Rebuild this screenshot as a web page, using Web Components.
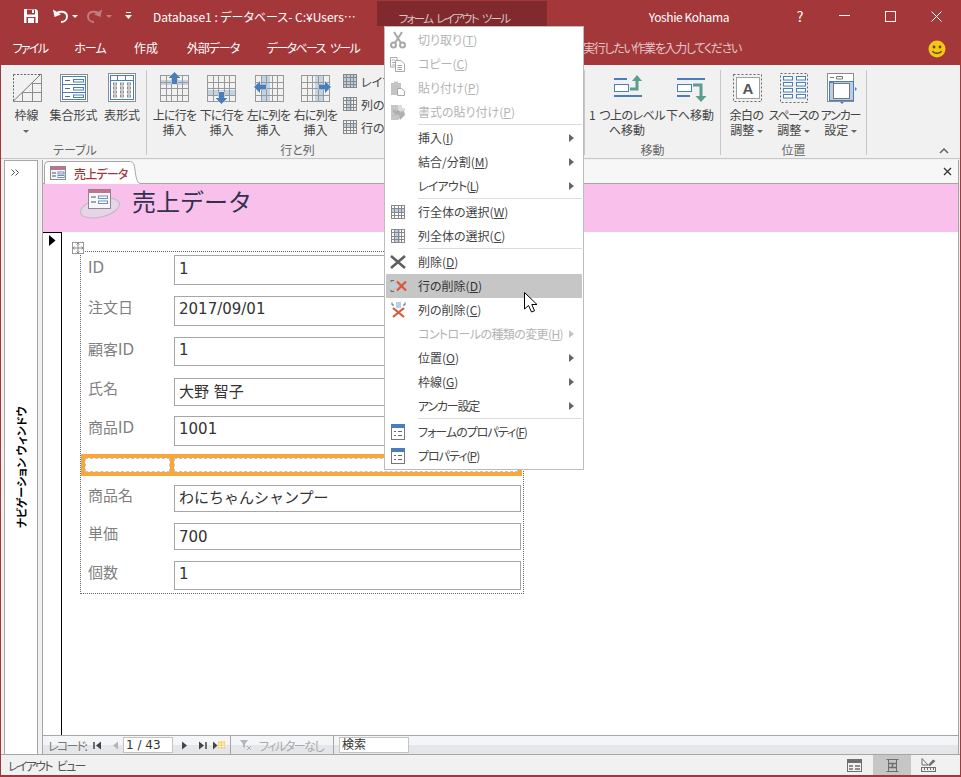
<!DOCTYPE html>
<html lang="ja">
<head>
<meta charset="utf-8">
<title>Database1</title>
<style>
  html, body { margin: 0; padding: 0; background: #fff; overflow: hidden; }
  .k4 { letter-spacing: -.8px; }
  .k5 { letter-spacing: -1.2px; }
  .k2 { letter-spacing: -.5px; word-spacing: 2px; }
</style>
</head>
<body>
<access-window>
  <title-bar></title-bar>
  <tab-row></tab-row>
  <ribbon-bar>
    <ribbon-group label="テーブル" w="143" pad="0">
      <ribbon-button icon="border" w="45">枠線<br><r-caret></r-caret></ribbon-button>
      <ribbon-button icon="stacked" w="49">集合形式</ribbon-button>
      <ribbon-button icon="tabular" w="48">表形式</ribbon-button>
    </ribbon-group>
    <ribbon-group label="行と列" w="302" pad="4">
      <ribbon-button icon="rowUp" w="47"><span class="k4">上に行を</span><br>挿入</ribbon-button>
      <ribbon-button icon="rowDown" w="47"><span class="k4">下に行を</span><br>挿入</ribbon-button>
      <ribbon-button icon="colLeft" w="47"><span class="k4">左に列を</span><br>挿入</ribbon-button>
      <ribbon-button icon="colRight" w="47"><span class="k4">右に列を</span><br>挿入</ribbon-button>
      <small-stack>
        <small-button icon="selAll">レイアウトの選択</small-button>
        <small-button icon="selCol">列の選択</small-button>
        <small-button icon="selRow">行の選択</small-button>
      </small-stack>
    </ribbon-group>
    <ribbon-group label="" w="136" pad="0"></ribbon-group>
    <ribbon-group label="移動" w="136" pad="6">
      <ribbon-button icon="moveUp" w="72"><span class="k2">1 つ上のレベル</span><br>へ移動</ribbon-button>
      <ribbon-button icon="moveDown" w="54">下へ移動</ribbon-button>
    </ribbon-group>
    <ribbon-group label="位置" w="146" pad="2">
      <ribbon-button icon="margins" w="47"><span class="k2">余白の</span><br>調整 <r-caret></r-caret></ribbon-button>
      <ribbon-button icon="spacing" w="47"><span class="k5">スペースの</span><br>調整 <r-caret></r-caret></ribbon-button>
      <ribbon-button icon="anchor" w="47"><span class="k5">アンカー</span><br>設定 <r-caret></r-caret></ribbon-button>
    </ribbon-group>
  </ribbon-bar>
  <work-area>
    <nav-pane></nav-pane>
    <doc-pane>
      <form-row label="ID" value="1" style="--h:30px;--gap:11px;--lp:4px;--vp:3px"></form-row>
      <form-row label="注文日" value="2017/09/01" style="--h:30px;--gap:11px;--lp:10px;--vp:5px"></form-row>
      <form-row label="顧客ID" value="1" style="--h:29px;--gap:12px;--lp:6px;--vp:3px"></form-row>
      <form-row label="氏名" value="大野 智子" style="--h:28px;--gap:10px;--lp:10px;--vp:3px"></form-row>
      <form-row label="商品ID" value="1001" style="--h:30px;--gap:8px;--lp:10px;--vp:5px"></form-row>
      <empty-row></empty-row>
      <form-row label="商品名" value="わにちゃんシャンプー" style="--h:27px;--gap:11px;--lp:8px;--vp:5px"></form-row>
      <form-row label="単価" value="700" style="--h:27px;--gap:11px;--lp:8px;--vp:0px"></form-row>
      <form-row label="個数" value="1" style="--h:29px;--gap:0px;--lp:8px;--vp:3px"></form-row>
    </doc-pane>
  </work-area>
  <status-bar></status-bar>

  <context-menu>
    <menu-item icon="cut" disabled><span>切り取り(<u>T</u>)</span></menu-item>
    <menu-item icon="copy" disabled><span>コピー(<u>C</u>)</span></menu-item>
    <menu-item icon="paste" disabled><span>貼り付け(<u>P</u>)</span></menu-item>
    <menu-item icon="painter" disabled><span>書式の貼り付け(<u>P</u>)</span></menu-item>
    <menu-sep></menu-sep>
    <menu-item arrow><span>挿入(<u>I</u>)</span></menu-item>
    <menu-item arrow><span>結合/分割(<u>M</u>)</span></menu-item>
    <menu-item arrow><span class="k4">レイアウト(<u>L</u>)</span></menu-item>
    <menu-sep></menu-sep>
    <menu-item icon="selRow"><span>行全体の選択(<u>W</u>)</span></menu-item>
    <menu-item icon="selCol"><span>列全体の選択(<u>C</u>)</span></menu-item>
    <menu-sep></menu-sep>
    <menu-item icon="del"><span>削除(<u>D</u>)</span></menu-item>
    <menu-item icon="delRow" hover><span>行の削除(<u>D</u>)</span></menu-item>
    <menu-item icon="delCol"><span>列の削除(<u>C</u>)</span></menu-item>
    <menu-item arrow disabled><span style="letter-spacing:-.6px">コントロールの種類の変更(<u>H</u>)</span></menu-item>
    <menu-item arrow><span>位置(<u>O</u>)</span></menu-item>
    <menu-item arrow><span>枠線(<u>G</u>)</span></menu-item>
    <menu-item arrow><span class="k5">アンカー設定</span></menu-item>
    <menu-sep></menu-sep>
    <menu-item icon="props"><span style="letter-spacing:-1px">フォームのプロパティ(<u>F</u>)</span></menu-item>
    <menu-item icon="props"><span style="letter-spacing:-1px">プロパティ(<u>P</u>)</span></menu-item>
  </context-menu>
  <mouse-pointer></mouse-pointer>
</access-window>

<script>
const UI_FONT = `"Noto Sans CJK JP", "Noto Sans", sans-serif`;
const BLUE = "#4a7ebb";
const GREEN = "#5c9e8e";
const GREY = "#999";

// draws a table of thin lines
function grid(x, y, w, h, cols, rows, color = GREY) {
  let d = "";
  for (let i = 0; i <= cols; i++) {
    const px = x + Math.round((w * i) / cols) + 0.5;
    d += `M${px} ${y}V${y + h + 1}`;
  }
  for (let i = 0; i <= rows; i++) {
    const py = y + Math.round((h * i) / rows) + 0.5;
    d += `M${x} ${py}H${x + w + 1}`;
  }
  return `<path d="${d}" fill="none" stroke="${color}"/>`;
}

const arrowAttrs = `fill="${BLUE}" stroke="#fff" stroke-width=".8" paint-order="stroke"`;
const arrowUp = (x, y) => `<path d="M${x} ${y}l6 6h-3.500v6h-5v-6h-3.500z" ${arrowAttrs}/>`;
const arrowDown = (x, y) => `<path d="M${x} ${y}l6 -6h-3.500v-6h-5v6h-3.500z" ${arrowAttrs}/>`;
const arrowLeft = (x, y) => `<path d="M${x} ${y}l6 -6v3.500h6v5h-6v3.500z" ${arrowAttrs}/>`;
const arrowRight = (x, y) => `<path d="M${x} ${y}l-6 -6v3.500h-6v5h6v3.500z" ${arrowAttrs}/>`;

function spacingColumn(x) {
  return [5, 11, 17, 23]
    .map((y) => `<rect x="${x + 0.5}" y="${y + 0.5}" width="9" height="3.500" fill="#fff" stroke="${BLUE}"/>`)
    .join("");
}

const ICONS = {
  // ribbon, 32x34
  border: [32, 34, `<path d="M2.500 3.500H30M2.500 3.500V30" fill="none" stroke="#666" stroke-dasharray="2 1.500"/>
    <path d="M2 30.500L30 3" stroke="#777" fill="none"/>
    <path d="M2 30.500H30.500V3M11.500 21V30M21.500 12V30M11 21.500H30M21 12.500H30" stroke="#8c8c8c" fill="none"/>`],
  stacked: [32, 34, `<rect x="2.500" y="3.500" width="27" height="27" fill="#fff" stroke="#8c8c8c"/>
    <rect x="4.500" y="5.500" width="23" height="23" fill="#fff" stroke="${BLUE}"/>
    <path d="M5 13.500H27M5 21.500H27" stroke="${BLUE}"/>
    <path d="M7 9.500H12M7 17.500H12M7 25.500H12" stroke="#666"/>
    <rect x="15.500" y="8.500" width="10" height="2.500" fill="#fff" stroke="${BLUE}"/>
    <rect x="15.500" y="16.500" width="10" height="2.500" fill="#fff" stroke="${BLUE}"/>
    <rect x="15.500" y="24" width="10" height="2.500" fill="#fff" stroke="${BLUE}"/>`],
  tabular: [32, 34, `<rect x="2.500" y="2.500" width="27" height="28" fill="#fff" stroke="#8c8c8c"/>
    <rect x="4.500" y="4.500" width="23" height="24" fill="#fff" stroke="${BLUE}"/>
    <path d="M11.500 5V9M19.500 5V9M5 9.500H27" stroke="${BLUE}"/>
    ${[12, 16, 20, 24].map((y) => [7.500, 14.500, 21.500].map((x) => `<rect x="${x}" y="${y}" width="3" height="2" fill="#fff" stroke="#777" stroke-width=".8"/>`).join("")).join("")}`],
  rowUp: [32, 34, `<rect x="1" y="9" width="29" height="5" fill="#c3d3e6"/>${grid(1, 4, 28, 26, 5, 4)}${arrowUp(15.500, 1)}`],
  rowDown: [32, 34, `<rect x="1" y="19" width="29" height="5" fill="#c3d3e6"/>${grid(1, 4, 28, 26, 5, 4)}${arrowDown(15.500, 33)}`],
  colLeft: [32, 34, `<rect x="9" y="4" width="8" height="26" fill="#c3d3e6"/>${grid(2, 4, 28, 26, 5, 4)}${arrowLeft(1, 16)}`],
  colRight: [32, 34, `<rect x="15" y="4" width="8" height="26" fill="#c3d3e6"/>${grid(1, 4, 28, 26, 5, 4)}${arrowRight(31, 16)}`],
  moveUp: [32, 34, `<rect x="3" y="7" width="13" height="2" fill="${BLUE}"/>
    <rect x="3.500" y="13.500" width="14" height="7" fill="#fff" stroke="${BLUE}"/>
    <rect x="3" y="24" width="28" height="2" fill="${BLUE}"/>
    <path d="M19 18H26V8" fill="none" stroke="${GREEN}" stroke-width="3"/>
    <path d="M26 4l5 6h-10z" fill="${GREEN}"/>`],
  moveDown: [32, 34, `<rect x="3" y="7" width="28" height="2" fill="${BLUE}"/>
    <rect x="3.500" y="13.500" width="14" height="7" fill="#fff" stroke="${BLUE}"/>
    <rect x="3" y="24" width="13" height="2" fill="${BLUE}"/>
    <path d="M19 14H27V26" fill="none" stroke="${GREEN}" stroke-width="3"/>
    <path d="M27 31l-5.500 -6h11z" fill="${GREEN}"/>`],
  margins: [32, 34, `<rect x="2.500" y="3.500" width="28" height="27" fill="none" stroke="#666" stroke-dasharray="2 2"/>
    <rect x="5.500" y="6.500" width="23" height="21" fill="#fff" stroke="#a0a0a0"/>
    <text x="17" y="23" text-anchor="middle" font-size="15" font-weight="700" fill="#555" font-family="Liberation Sans, sans-serif">A</text>`],
  spacing: [32, 34, `<rect x="2.500" y="2.500" width="27" height="29" fill="none" stroke="#666" stroke-dasharray="2 2"/>
    ${spacingColumn(5)}${spacingColumn(18)}`],
  anchor: [32, 34, `<rect x="2.500" y="2.500" width="26" height="28" fill="#fff" stroke="#8c8c8c"/>
    <path d="M5 6.500H9M11.500 5.500h6v2.500h-6z" fill="none" stroke="#777"/>
    <rect x="4.500" y="10.500" width="24" height="19" fill="#b9cde4" stroke="${BLUE}"/>
    <rect x="8.500" y="12.500" width="16" height="15" fill="#fff" stroke="#777"/>
    <path d="M5 11.500H9" stroke="#777"/>
    <path d="M30 16l2 2 -2 2z M15 31l2 2 2 -2z" fill="${BLUE}"/>`],
  // small stack in the ribbon and menu entries
  selAll: [14, 14, `<rect width="14" height="14" fill="#bccde2"/>${grid(0, 0, 13, 13, 4, 4, "#888")}`],
  selCol: [14, 14, `<rect x="4" width="5" height="14" fill="#bccde2"/>${grid(0, 0, 13, 13, 4, 4, "#888")}`],
  selRow: [14, 14, `<rect y="3" width="14" height="4" fill="#bccde2"/>${grid(0, 0, 13, 13, 4, 4, "#888")}`],
  cut: [18, 18, `<g fill="none" stroke="#a8a8a8" stroke-width="2"><circle cx="4.500" cy="14" r="2.500"/><circle cx="13.500" cy="14" r="2.500"/><path d="M6 12L13 1M12 12L5 1"/></g>`],
  copy: [16, 16, `<g fill="#fff" stroke="#a8a8a8"><path d="M.5 1.500H7V11H.5z"/><path d="M5.500 4.500H11L14.500 8V15.500H5.500z"/><path d="M2 4H5M2 6.500H5M2 9H5M7.500 9.500H12M7.500 11.500H12M7.500 13.500H12"/></g>`],
  paste: [16, 16, `<path d="M1 3H4V1.500H8V3H11V15H1z" fill="#c4c4c4"/><path d="M7.500 8.500H11.500L14.500 11V15.500H7.500z" fill="#fff" stroke="#a8a8a8"/>`],
  painter: [18, 18, `<path d="M2 2H12V5H15V12L9 17H2z" fill="#c6c6c6"/><path d="M9 2H13V5H16V8H9z" fill="#dcdcdc"/><text x="4" y="12" font-size="8" fill="#8e8e8e" font-family="Liberation Sans, sans-serif">%</text><path d="M10 10l5 -2 1 4 -5 5z" fill="#b0b0b0"/>`],
  del: [16, 14, `<path d="M1 1L15 13M15 1L1 13" stroke="#5f5f5f" stroke-width="2.600" fill="none"/>`],
  delRow: [17, 14, `<path d="M1 1.500H4M1 1.500V3M1 11V12.500H4" stroke="#666" fill="none"/><rect x="0" y="5" width="7" height="4" fill="#bccde2"/><path d="M7 2.500L16 11.500M16 2.500L7 11.500" stroke="#d9583a" stroke-width="2.200" fill="none"/>`],
  delCol: [15, 16, `<path d="M1 .5V3H3M14 .5V3H12" stroke="#666" fill="none"/><rect x="5" y="0" width="5" height="6" fill="#bccde2"/><path d="M2 6L13 15M13 6L2 15" stroke="#d9583a" stroke-width="2.200" fill="none"/>`],
  props: [14, 16, `<rect x=".5" y=".5" width="13" height="15" fill="#fff" stroke="#777"/><rect width="14" height="4" fill="${BLUE}"/><path d="M3 7.500H5M3 11.500H5M7 7.500H11M7 11.500H11" stroke="#666"/>`],
  // record navigation
  first: [9, 9, `<path d="M1 1V8" stroke="#444" stroke-width="1.500"/><path d="M8 .5V8.500L3 4.500z" fill="#444"/>`],
  prev: [7, 9, `<path d="M6 .5V8.500L1 4.500z" fill="#b5b5b5"/>`],
  next: [7, 9, `<path d="M1 .5V8.500L6 4.500z" fill="#444"/>`],
  last: [9, 9, `<path d="M8 1V8" stroke="#444" stroke-width="1.500"/><path d="M1 .5V8.500L6 4.500z" fill="#444"/>`],
  newRec: [12, 9, `<path d="M0 .5V8.500L4.500 4.500z" fill="#444"/><rect x="5" y=".5" width="7" height="7" fill="#f3c64a"/><path d="M7 .5V8M10 .5V8M5 3H12M5 5.500H12" stroke="#fff" stroke-width=".7"/>`],
  filter: [12, 12, `<path d="M0 1H8L5 5V9L3 8V5z" fill="#b5b5b5"/><path d="M7 7L11 11M11 7L7 11" stroke="#b5b5b5"/>`],
  // status bar views
  viewForm: [15, 13, `<rect width="15" height="13" fill="#6e6e6e"/><rect x="1" y="4" width="13" height="8" fill="#f1f1f1"/><path d="M2 7H6M2 10H6M8 7H13M8 10H13" stroke="#6e6e6e" stroke-width="1.500"/>`],
  viewLayout: [13, 13, `<path d="M.5 .5H12.500M.5 12.500H12.500M2.500 1V12M10.500 1V12" stroke="#6e6e6e" fill="none"/><path d="M3 4.500H10M3 8.500H10M6.500 4V9" stroke="#6e6e6e" fill="none" stroke-width="1.500"/>`],
  viewDesign: [15, 14, `<path d="M1 .5V7H7z" fill="#f1f1f1" stroke="#6e6e6e"/><path d="M7 7L12 1.500L14.500 3L9 8z" fill="#6e6e6e"/><rect x=".5" y="9.500" width="14" height="4" fill="#f1f1f1" stroke="#6e6e6e"/><path d="M3.500 10V12M6.500 10V12M9.500 10V12M12.500 10V12" stroke="#6e6e6e"/>`],
};

class Base extends HTMLElement {
  constructor() {
    super();
    this.attachShadow({ mode: "open" });
  }
  render(html) {
    this.shadowRoot.innerHTML = html;
  }
}

class AppIcon extends Base {
  connectedCallback() {
    const [w, h, body] = ICONS[this.getAttribute("name")] || [0, 0, ""];
    this.render(`<style>:host{display:block;width:${w}px;height:${h}px;flex:none}svg{display:block}</style>
      <svg width="${w}" height="${h}" viewBox="0 0 ${w} ${h}">${body}</svg>`);
  }
}
customElements.define("app-icon", AppIcon);

class AccessWindow extends Base {
  connectedCallback() {
    this.render(`<style>
      :host{display:flex;flex-direction:column;position:relative;box-sizing:border-box;width:961px;height:777px;
        border:1px solid #a4373a;border-top:0;border-bottom-width:2px;background:#f1f1f1;overflow:hidden;
        font-family:${UI_FONT};font-size:12px;font-feature-settings:"palt";color:#444}
    </style><slot></slot>`);
  }
}
customElements.define("access-window", AccessWindow);

class TitleBar extends Base {
  connectedCallback() {
    this.render(`<style>
      :host{display:flex;height:32px;margin:0 -1px;padding:0 2px 0 1px;background:#a4373a;color:#fff;flex:none;font-size:12px}
      svg{display:block}
      .qat{display:flex;align-items:center;width:152px;flex:none;height:32px}
      .title{width:224px;flex:none;line-height:34px;white-space:nowrap}
      .ctx{width:170px;height:25px;margin-top:1px;flex:none;box-sizing:border-box;padding-right:16px;background:#802a2d;color:#d9c3c4;text-align:center;line-height:34px;font-size:11.500px;letter-spacing:-1.700px;word-spacing:3px;white-space:nowrap}
      .fill{flex:1}
      .user{line-height:34px;margin-right:46px;letter-spacing:-.4px}
      .win{width:46px;display:flex;align-items:center;justify-content:center;flex:none;height:32px}
      .help{font-size:14px;padding-left:4px;box-sizing:border-box}
    </style>
    <div class="qat">
      <svg width="16" height="16" style="margin-left:22px" viewBox="0 0 16 16"><path d="M1 1H13L15 3V15H1z" fill="#fff"/><rect x="4" y="1.500" width="8" height="5" fill="#a4373a"/><rect x="3.500" y="9" width="9" height="6" fill="#a4373a"/><rect x="9" y="2" width="2" height="3" fill="#fff"/><rect x="5" y="10" width="6" height="5" fill="#fff"/></svg>
      <svg width="26" height="16" style="margin-left:13px" viewBox="0 0 26 16"><path d="M3 7C6 2 15 3 15 8.500C15 12 12 14 9 14" fill="none" stroke="#fff" stroke-width="2"/><path d="M1 1.500L2.500 9L9 6.500z" fill="#fff"/><path d="M20 7H26L23 10z" fill="#fff"/></svg>
      <svg width="26" height="16" style="margin-left:8px" viewBox="0 0 26 16"><path d="M14 7C11 2 2 3 2 8.500C2 12 5 14 8 14" fill="none" stroke="#c27c7e" stroke-width="2"/><path d="M16 1.500L14.500 9L8 6.500z" fill="#c27c7e"/><path d="M20 7H26L23 10z" fill="#c27c7e"/></svg>
      <svg width="7" height="8" style="margin-left:13px" viewBox="0 0 7 8"><path d="M1 .5H6" stroke="#fff"/><path d="M0 3H7L3.500 7z" fill="#fff"/></svg>
    </div>
    <div class="title">Database1 : データベース- C:¥Users⋯</div>
    <div class="ctx">フォーム レイアウト ツール</div>
    <div class="fill"></div>
    <div class="user">Yoshie Kohama</div>
    <div class="win help">?</div>
    <div class="win"><svg width="11" height="2"><rect width="11" height="1" y="0" fill="#fff"/></svg></div>
    <div class="win"><svg width="11" height="11"><rect x=".5" y=".5" width="10" height="10" fill="none" stroke="#fff"/></svg></div>
    <div class="win"><svg width="11" height="11"><path d="M.5 .5L10.500 10.500M10.500 .5L.5 10.500" stroke="#fff"/></svg></div>`);
  }
}
customElements.define("title-bar", TitleBar);

class TabRow extends Base {
  connectedCallback() {
    this.render(`<style>
      :host{display:flex;height:33px;margin:0 -1px;background:#a4373a;color:#fff;flex:none;font-size:12px;align-items:center}
      span{display:block;text-align:center;flex:none;padding-bottom:2px;white-space:nowrap}
      .tell{color:#e2c9ca;margin-left:211px;width:340px;text-align:left;letter-spacing:-1.300px}
      svg{display:block;margin-left:5px}
    </style>
    <span style="width:60px;letter-spacing:-1.700px">ファイル</span>
    <span style="width:60px;letter-spacing:-1px">ホーム</span>
    <span style="width:52px">作成</span>
    <span style="width:82px;letter-spacing:-1px">外部データ</span>
    <span style="width:118px;letter-spacing:-1.600px;word-spacing:4px">データベース ツール</span>
    <span class="tell">実行したい作業を入力してください</span>
    <svg width="18" height="18" viewBox="0 0 18 18"><circle cx="9" cy="9" r="8.500" fill="#f5c518"/><circle cx="6" cy="7" r="1.400" fill="#5a4a10"/><circle cx="12" cy="7" r="1.400" fill="#5a4a10"/><path d="M4.500 11C6 14 12 14 13.500 11" fill="none" stroke="#5a4a10" stroke-width="1.300"/></svg>`);
  }
}
customElements.define("tab-row", TabRow);

class RibbonBar extends Base {
  connectedCallback() {
    this.render(`<style>
      :host{display:flex;height:93px;padding:5px 0 0 3px;box-sizing:border-box;background:#f1f1f1;flex:none;position:relative}
      svg{align-self:flex-end;margin:0 0 4px 72px}
    </style><slot></slot>
    <svg width="10" height="6" viewBox="0 0 10 6"><path d="M1 5L5 1L9 5" fill="none" stroke="#666" stroke-width="1.500"/></svg>`);
  }
}
customElements.define("ribbon-bar", RibbonBar);

class RibbonGroup extends Base {
  connectedCallback() {
    const w = this.getAttribute("w");
    const pad = this.getAttribute("pad");
    this.render(`<style>
      :host{display:flex;flex-direction:column;width:${w}px;height:85px;box-sizing:border-box;border-right:1px solid #c6c6c6;flex:none}
      .btns{display:flex;height:72px;padding-left:${pad}px}
      .label{height:13px;line-height:15px;text-align:center;color:#666;white-space:nowrap}
    </style><div class="btns"><slot></slot></div><div class="label">${this.getAttribute("label")}</div>`);
  }
}
customElements.define("ribbon-group", RibbonGroup);

class RibbonButton extends Base {
  connectedCallback() {
    this.render(`<style>
      :host{display:flex;flex-direction:column;align-items:center;width:${this.getAttribute("w")}px;flex:none;padding-top:1px;box-sizing:border-box}
      .t{margin-top:2px;line-height:15px;text-align:center;white-space:nowrap}
    </style><app-icon name="${this.getAttribute("icon")}"></app-icon><div class="t"><slot></slot></div>`);
  }
}
customElements.define("ribbon-button", RibbonButton);

class RCaret extends Base {
  connectedCallback() {
    this.render(`<style>:host{display:inline-block;width:0;height:0;border:3px solid transparent;border-top:3px solid #666;border-bottom:0;vertical-align:middle}</style>`);
  }
}
customElements.define("r-caret", RCaret);

class SmallStack extends Base {
  connectedCallback() {
    this.render(`<style>:host{display:flex;flex-direction:column;gap:9px;padding:4px 0 0 4px}</style><slot></slot>`);
  }
}
customElements.define("small-stack", SmallStack);

class SmallButton extends Base {
  connectedCallback() {
    this.render(`<style>:host{display:flex;align-items:center;gap:4px;height:14px;white-space:nowrap}</style>
      <app-icon name="${this.getAttribute("icon")}"></app-icon><slot></slot>`);
  }
}
customElements.define("small-button", SmallButton);

class WorkArea extends Base {
  connectedCallback() {
    this.render(`<style>
      :host{display:flex;flex:1;min-height:0;border-top:1px solid #c6c6c6;padding:1px 0 0 3px;background:#f1f1f1}
    </style><slot></slot>`);
  }
}
customElements.define("work-area", WorkArea);

class NavPane extends Base {
  connectedCallback() {
    this.render(`<style>
      :host{display:flex;flex-direction:column;align-items:center;width:34px;box-sizing:border-box;background:#fff;
        border:1px solid #a6a6a6;border-bottom:0;margin-right:4px;flex:none}
      svg{display:block;margin:8px 12px 0 0}
      .t{writing-mode:vertical-rl;text-orientation:sideways;transform:rotate(180deg);margin-top:230px;margin-left:-1px;
        font-size:11px;font-weight:700;color:#000;white-space:nowrap;line-height:14px}
    </style>
    <svg width="9" height="7" viewBox="0 0 9 7"><path d="M.5 .5L3.500 3.500L.5 6.500M4.500 .5L7.500 3.500L4.500 6.500" fill="none" stroke="#555"/></svg>
    <div class="t">ナビゲーション ウィンドウ</div>`);
  }
}
customElements.define("nav-pane", NavPane);

class DocPane extends Base {
  connectedCallback() {
    this.render(`<style>
      :host{display:flex;flex-direction:column;flex:1;min-width:0;border-left:1px solid #a6a6a6;margin-right:1px;border-right:1px solid #a6a6a6;background:#fff}
      .strip{display:flex;height:23px;flex:none;background:#f7f7f7;border-bottom:1px solid #a6a6a6;align-items:flex-end;position:relative}
      .tab{display:flex;align-items:center;gap:7px;width:85px;height:23px;box-sizing:border-box;padding-left:5px;background:#fff;white-space:nowrap;
        border:1px solid #a6a6a6;border-bottom:0;border-right:0;border-radius:5px 0 0 0;color:#a4373a;font-size:12px;font-weight:500;margin:0 0 -1px 1px;letter-spacing:-.8px}
      .tail{display:block;margin-bottom:-1px}
      .x{margin-left:auto;margin-right:6px;align-self:center}
      .pink{display:flex;align-items:center;height:48px;flex:none;background:#f9c0ec;padding-left:37px}
      .pink svg{margin-bottom:6px}
      .pink h1{margin:0 0 14px 12px;font-size:24px;font-weight:400;color:#30324e;font-feature-settings:normal;line-height:30px}
      .body{display:flex;flex:1;min-height:0}
      .sel{flex:none;border-top:1px solid #000;border-right:1px solid #000;padding:2px 0 0 6px;width:12px}
      .sel svg{display:block}
      .canvas{flex:1;padding:19px 0 0 18px;min-width:0}
      .handle{display:flex;align-items:center;justify-content:center;width:12px;height:12px;box-sizing:border-box;border:1px solid #999;background:#fff;margin:-9px 0 -3px -8px;position:relative}
      .form{width:444px;box-sizing:border-box;border:1px dotted #666;padding:3px 0;font-size:15px}
      .foot{flex:none}
    </style>
    <div class="strip">
      <div class="tab">
        <svg width="17" height="14" viewBox="0 0 17 14"><rect x=".5" y=".5" width="15" height="13" fill="#f3f5f8" stroke="#8a8a8a"/><rect x="1" y="1" width="14" height="3" fill="#c2718f"/><path d="M2 7H6M2 10H6" stroke="#555"/><rect x="8" y="6" width="6" height="2" fill="#fff" stroke="#6f8fb5"/><rect x="8" y="9.500" width="6" height="2" fill="#fff" stroke="#6f8fb5"/></svg>
        <span>売上データ</span>
      </div>
      <svg class="tail" width="11" height="23" viewBox="0 0 11 23"><path d="M0 .5C5 .5 5 3 6 9C7 17 8 21.500 11 22.500V24H0z" fill="#fff"/><path d="M0 .5C5 .5 5 3 6 9C7 17 8 21.500 11 22.500" fill="none" stroke="#a6a6a6"/></svg>
      <svg class="x" width="9" height="9" viewBox="0 0 9 9"><path d="M1 1L8 8M8 1L1 8" stroke="#333" stroke-width="1.300"/></svg>
    </div>
    <div class="pink">
      <svg width="40" height="34" viewBox="0 0 40 34"><ellipse cx="20" cy="20" rx="20" ry="9" transform="rotate(-14 20 20)" fill="#e8d4e6" stroke="#bcbcbc"/><rect x="8.500" y="1.500" width="22" height="19" fill="#f4f6fa" stroke="#8a8a8a"/><rect x="9" y="2" width="21" height="3" fill="#c2718f"/><path d="M11 9H16M11 14H16" stroke="#555"/><rect x="18.500" y="8" width="9" height="2.500" fill="#fff" stroke="#6f8fb5"/><rect x="18.500" y="13" width="9" height="2.500" fill="#fff" stroke="#6f8fb5"/></svg>
      <h1>売上データ</h1>
    </div>
    <div class="body">
      <div class="sel"><svg width="7" height="11" viewBox="0 0 7 11"><path d="M0 0L6.500 5.500L0 11z" fill="#000"/></svg></div>
      <div class="canvas">
        <div class="handle"><svg width="10" height="10" viewBox="0 0 10 10"><path d="M5 0V10M0 5H10M3.500 1.500L5 0L6.500 1.500M3.500 8.500L5 10L6.500 8.500M1.500 3.500L0 5L1.500 6.500M8.500 3.500L10 5L8.500 6.500" fill="none" stroke="#888"/></svg></div>
        <div class="form"><slot></slot></div>
      </div>
    </div>
    <record-bar class="foot"></record-bar>`);
  }
}
customElements.define("doc-pane", DocPane);

class FormRow extends Base {
  connectedCallback() {
    this.render(`<style>
      :host{display:flex;align-items:center;height:var(--h);margin-bottom:var(--gap);
        font-family:"DejaVu Sans","Noto Sans CJK JP",sans-serif;font-size:15px;font-feature-settings:normal}
      .l{width:86px;margin-left:7px;padding-bottom:var(--lp);color:#7f7f7f;flex:none;white-space:nowrap}
      .v{width:347px;height:100%;box-sizing:border-box;border:1px solid #a6a6a6;background:#fff;padding:0 4px;padding-bottom:var(--vp);color:#333;display:flex;align-items:center;white-space:nowrap;flex:none}
    </style>
    <div class="l">${this.getAttribute("label")}</div><div class="v">${this.getAttribute("value")}</div>`);
  }
}
customElements.define("form-row", FormRow);

class EmptyRow extends Base {
  connectedCallback() {
    this.render(`<style>
      :host{display:flex;height:22px;margin-bottom:9px}
      div{box-sizing:border-box;height:100%;border:4px solid #f9a63b;outline:1px dashed #c4c4c4;outline-offset:-5px}
      .a{width:93px}
      .b{width:352px;margin-left:-4px}
    </style><div class="a"></div><div class="b"></div>`);
  }
}
customElements.define("empty-row", EmptyRow);

class RecordBar extends Base {
  connectedCallback() {
    this.render(`<style>
      :host{display:flex;align-items:center;height:19px;flex:none;box-sizing:border-box;border-top:1px solid #a6a6a6;
        background:linear-gradient(#f4f5f7 0 50%,#e4e6ea 50% 100%);font-size:12px;color:#777}
      .lbl{margin-left:5px;width:40px;flex:none;white-space:nowrap;letter-spacing:-1.700px}
      .nav{display:flex;align-items:center;justify-content:center;width:18px;flex:none}
      .box{background:#fff;border:1px solid #c4c4c4;box-sizing:border-box;height:16px;line-height:14px;color:#333;white-space:nowrap;flex:none;font-family:"DejaVu Sans","Noto Sans CJK JP",sans-serif;font-feature-settings:normal;font-size:12px;padding-left:2px}
      .sep{width:1px;height:18px;background:#a6a6a6;flex:none}
      .f{color:#aaa;white-space:nowrap;margin-left:7px;width:66px;letter-spacing:-1.500px}
    </style>
    <div class="lbl">レコード:</div>
    <div class="nav"><app-icon name="first"></app-icon></div>
    <div class="nav"><app-icon name="prev"></app-icon></div>
    <div class="box" style="width:50px;margin-left:-1px">1 / 43</div>
    <div class="nav" style="margin-left:2px"><app-icon name="next"></app-icon></div>
    <div class="nav"><app-icon name="last"></app-icon></div>
    <div class="nav" style="width:13px;margin-left:1px"><app-icon name="newRec"></app-icon></div>
    <div class="sep" style="margin-left:5px"></div>
    <div style="width:9px;flex:none"></div>
    <app-icon name="filter"></app-icon>
    <div class="f">フィルターなし</div>
    <div class="sep" style="margin-left:8px"></div>
    <div class="box" style="width:70px;margin-left:5px">検索</div>`);
  }
}
customElements.define("record-bar", RecordBar);

class StatusBar extends Base {
  connectedCallback() {
    this.render(`<style>
      :host{display:flex;align-items:center;height:20px;flex:none;background:#f1f1f1;border-top:1px solid #a6a6a6;color:#555;font-size:12px}
      .t{margin-left:7px;flex:1;white-space:nowrap;letter-spacing:-1.700px;word-spacing:4px}
      .v{display:flex;align-items:center;justify-content:center;width:38px;height:100%;flex:none}
      .on{background:#c6c6c6}
    </style>
    <div class="t">レイアウト ビュー</div>
    <div class="v"><app-icon name="viewForm"></app-icon></div>
    <div class="v on"><app-icon name="viewLayout"></app-icon></div>
    <div class="v" style="width:34px;margin-right:15px"><app-icon name="viewDesign"></app-icon></div>`);
  }
}
customElements.define("status-bar", StatusBar);

class ContextMenu extends Base {
  connectedCallback() {
    this.render(`<style>
      :host{position:absolute;left:383px;top:26px;width:200px;height:444px;box-sizing:border-box;background:#fff;border:1px solid #bdbdbd;padding:1px 1px;
        display:flex;flex-direction:column;font-size:12px;color:#444}
    </style><slot></slot>`);
  }
}
customElements.define("context-menu", ContextMenu);

class MenuSep extends Base {
  connectedCallback() {
    this.render(`<style>:host{display:block;height:2px;flex:none;margin-left:32px;box-sizing:border-box;border-top:1px solid #dcdcdc}</style>`);
  }
}
customElements.define("menu-sep", MenuSep);

class MenuItem extends Base {
  connectedCallback() {
    const icon = this.getAttribute("icon");
    const on = this.hasAttribute("hover");
    const off = this.hasAttribute("disabled");
    this.render(`<style>
      :host{display:flex;align-items:center;height:24px;flex:none;white-space:nowrap;position:relative;
        ${on ? "background:#c6c6c6;color:#333;" : ""}${off ? "color:#b3b3b3;" : ""}}
      .i{width:24px;display:flex;justify-content:center;align-items:center;flex:none;margin-right:8px}
      .t{flex:1;padding-bottom:2px}
      svg{display:block;margin-right:8px}
    </style>
    <div class="i">${icon ? `<app-icon name="${icon}"></app-icon>` : ""}</div>
    <div class="t"><slot></slot></div>
    ${this.hasAttribute("arrow") ? `<svg width="5" height="8" viewBox="0 0 5 8"><path d="M0 0L5 4L0 8z" fill="${off ? "#c4c4c4" : "#666"}"/></svg>` : ""}`);
  }
}
customElements.define("menu-item", MenuItem);

class MousePointer extends Base {
  connectedCallback() {
    this.render(`<style>:host{position:absolute;left:523px;top:292px;width:15px;height:21px}svg{display:block}</style>
      <svg width="15" height="21" viewBox="0 0 15 21"><path d="M.5 .5V17L4.500 13.500L7.500 20L10.500 18.800L7.800 12.500H13z" fill="#fff" stroke="#000"/></svg>`);
  }
}
customElements.define("mouse-pointer", MousePointer);
</script>
</body>
</html>
